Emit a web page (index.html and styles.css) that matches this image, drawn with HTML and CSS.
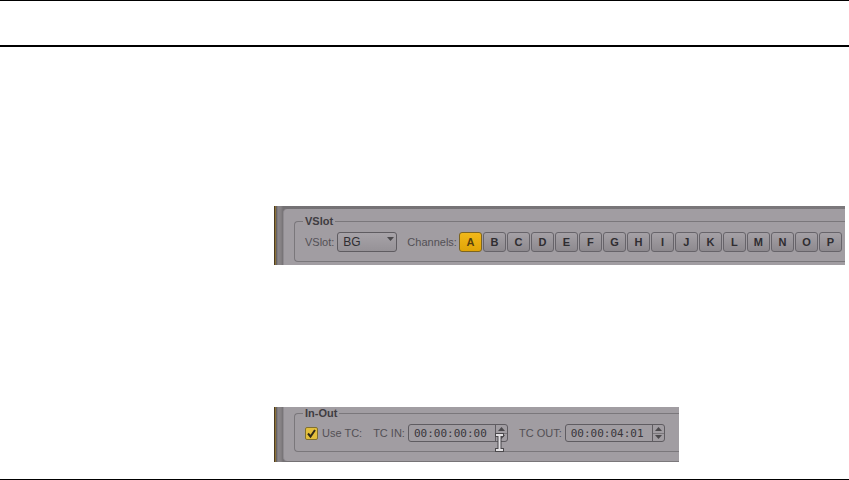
FILE: index.html
```html
<!DOCTYPE html>
<html lang="en">
<head>
    <meta charset="utf-8">
    <title>VSlot and In-Out settings</title>
    <meta name="viewport" content="width=device-width, initial-scale=1">
    <link rel="stylesheet" href="styles.css">
</head>
<body>

<header class="page-header"></header>

<main class="content">
    <!-- VSlot panel -->
    <section class="panel panel-vslot">
        <div class="panel-body">
            <fieldset class="group">
                <legend>VSlot</legend>
                <div class="row">
                    <label for="vslot">VSlot:</label>
                    <div class="select-wrap">
                        <select id="vslot" class="select">
                            <option>BG</option>
                        </select>
                        <svg class="select-arrow" width="7" height="5" viewBox="0 0 7 5"><path d="M0 0h7L3.500 4z" fill="#4b494c"/></svg>
                    </div>
                    <span class="channels-label" id="channels-label">Channels:</span>
                    <div class="channels" role="group" aria-labelledby="channels-label">
                        <button type="button" class="channel active">A</button>
                        <button type="button" class="channel">B</button>
                        <button type="button" class="channel">C</button>
                        <button type="button" class="channel">D</button>
                        <button type="button" class="channel">E</button>
                        <button type="button" class="channel">F</button>
                        <button type="button" class="channel">G</button>
                        <button type="button" class="channel">H</button>
                        <button type="button" class="channel">I</button>
                        <button type="button" class="channel">J</button>
                        <button type="button" class="channel">K</button>
                        <button type="button" class="channel">L</button>
                        <button type="button" class="channel">M</button>
                        <button type="button" class="channel">N</button>
                        <button type="button" class="channel">O</button>
                        <button type="button" class="channel">P</button>
                    </div>
                </div>
            </fieldset>
        </div>
    </section>

    <!-- In-Out panel -->
    <section class="panel panel-inout">
        <div class="panel-body">
            <fieldset class="group">
                <legend>In-Out</legend>
                <div class="row">
                    <input type="checkbox" id="use-tc" class="check" checked>
                    <label for="use-tc">Use TC:</label>
                    <label for="tc-in" class="tc-label">TC IN:</label>
                    <div class="spin">
                        <input type="text" id="tc-in" class="timecode" value="00:00:00:00">
                        <div class="spin-buttons">
                            <button type="button" aria-label="Increase TC IN"><svg width="7" height="4" viewBox="0 0 7 4"><path d="M0 4h7L3.500 0z"/></svg></button>
                            <button type="button" aria-label="Decrease TC IN"><svg width="7" height="4" viewBox="0 0 7 4"><path d="M0 0h7L3.500 4z"/></svg></button>
                        </div>
                        <!-- text cursor over the spin buttons -->
                        <svg class="cursor" width="9" height="19" viewBox="0 0 9 19">
                            <path d="M0 2h9M4.500 2v15M0 17h9" fill="none" stroke="#4b494c" stroke-width="4"/>
                            <path d="M1 2h7M4.500 2v15M1 17h7" fill="none" stroke="#e2e0e3" stroke-width="2"/>
                        </svg>
                    </div>
                    <label for="tc-out" class="tc-label">TC OUT:</label>
                    <div class="spin">
                        <input type="text" id="tc-out" class="timecode" value="00:00:04:01">
                        <div class="spin-buttons">
                            <button type="button" aria-label="Increase TC OUT"><svg width="7" height="4" viewBox="0 0 7 4"><path d="M0 4h7L3.500 0z"/></svg></button>
                            <button type="button" aria-label="Decrease TC OUT"><svg width="7" height="4" viewBox="0 0 7 4"><path d="M0 0h7L3.500 4z"/></svg></button>
                        </div>
                    </div>
                </div>
            </fieldset>
        </div>
    </section>
</main>

<footer class="page-footer"></footer>

</body>
</html>
```

FILE: styles.css
```css
* {
    box-sizing: border-box;
}

body {
    margin: 0;
    min-height: 100vh;
    display: flex;
    flex-direction: column;
    background-color: white;
    color: #535055;
    font-family: "Liberation Sans", Arial, sans-serif;
    font-size: 11px;
    line-height: 12px;
}

/* Page rules */
.page-header {
    height: 47px;
    border-top: 1px solid black;
    border-bottom: 2px solid black;
}

.page-footer {
    border-top: 1px solid black;
}

.content {
    flex: 1;
    display: flex;
    flex-direction: column;
    align-items: flex-start;
    gap: 142px;
    padding: 159px 4px 17px 274px;
}

/* Panels */
.panel {
    overflow: hidden;
    padding-left: 9px;
    background: linear-gradient(to right, #4a3a22 0, #4a3a22 1px, #8b7136 1px, #8b7136 2px, #595559 2px, #8b878a 4px, #858184 7px, #747174 9px, #7b787b 100%);
}

.panel-body {
    background-color: #a19da2;
    border-left: 1px solid #8f8b90;
    padding-left: 10px;
}

.panel-vslot {
    width: 100%;
    padding-top: 3px;
}

.panel-vslot .panel-body {
    border-top-left-radius: 4px;
    padding-top: 6px;
    padding-bottom: 3px;
}

.panel-inout {
    padding-bottom: 1px;
}

.panel-inout .panel-body {
    border-bottom-left-radius: 4px;
    padding-bottom: 9px;
}

/* Group boxes */
.group {
    min-width: 0;
    margin: 0;
    padding: 5px 4px 9px 10px;
    border: 1px solid #7a777b;
    border-right: 0;
    border-radius: 4px 0 0 4px;
}

.panel-inout .group {
    padding-right: 14px;
}

.group legend {
    margin-left: -2px;
    padding: 0 2px;
    color: #3f3c41;
    font-weight: bold;
}

.row {
    display: flex;
    align-items: center;
    white-space: nowrap;
}

/* VSlot drop-down */
.select-wrap {
    position: relative;
    margin-left: 3px;
}

.select {
    appearance: none;
    display: block;
    width: 60px;
    height: 20px;
    padding: 0 5px;
    border: 1px solid #5f5c61;
    border-radius: 3px;
    background: linear-gradient(#a7a3a8, #969297);
    color: #2f2d31;
    font: 12px "Liberation Sans", Arial, sans-serif;
}

.select-arrow {
    position: absolute;
    top: 5px;
    right: 3px;
}

/* Channel buttons */
.channels-label {
    margin-left: 10px;
}

.channels {
    display: flex;
    gap: 1px;
    margin-left: 2px;
}

.channel {
    width: 23px;
    height: 20px;
    padding: 0;
    border: 1px solid #67646a;
    border-radius: 3px;
    background: linear-gradient(#a5a1a6, #8d898e);
    color: #2f2d31;
    font: bold 11px "Liberation Sans", Arial, sans-serif;
}

.channel.active {
    border-color: #7d6420;
    background: linear-gradient(#f2b81a, #e0a508);
    color: #54400d;
}

/* Use TC tick box */
.check {
    appearance: none;
    width: 13px;
    height: 13px;
    margin: 0 4px 0 0;
    border: 1px solid #80702f;
    border-radius: 2px;
    background: #e3bf3c url('data:image/svg+xml,<svg xmlns="http://www.w3.org/2000/svg" viewBox="0 0 11 11"><path d="M2 5.500l2.500 3L9 2" fill="none" stroke="%23302a18" stroke-width="2"/></svg>') center no-repeat;
}

/* Timecode boxes */
.tc-label {
    margin-left: 11px;
}

.spin {
    position: relative;
    display: flex;
    width: 100px;
    height: 18px;
    margin-left: 3px;
    border: 1px solid #5f5c61;
    border-radius: 3px;
}

.timecode {
    flex: 1;
    min-width: 0;
    padding: 0 0 0 5px;
    border: 0;
    background: none;
    color: #39363b;
    font: 11px "DejaVu Sans Mono", monospace;
}

.spin-buttons {
    display: flex;
    flex-direction: column;
    width: 12px;
    border-left: 1px solid #5f5c61;
}

.spin-buttons button {
    flex: 1;
    display: flex;
    align-items: center;
    justify-content: center;
    padding: 0;
    border: 0;
    background: none;
}

.spin-buttons button + button {
    border-top: 1px solid #7a777b;
}

.spin-buttons path {
    fill: #4b494c;
}

.cursor {
    position: absolute;
    top: 8px;
    right: 3px;
}
```
